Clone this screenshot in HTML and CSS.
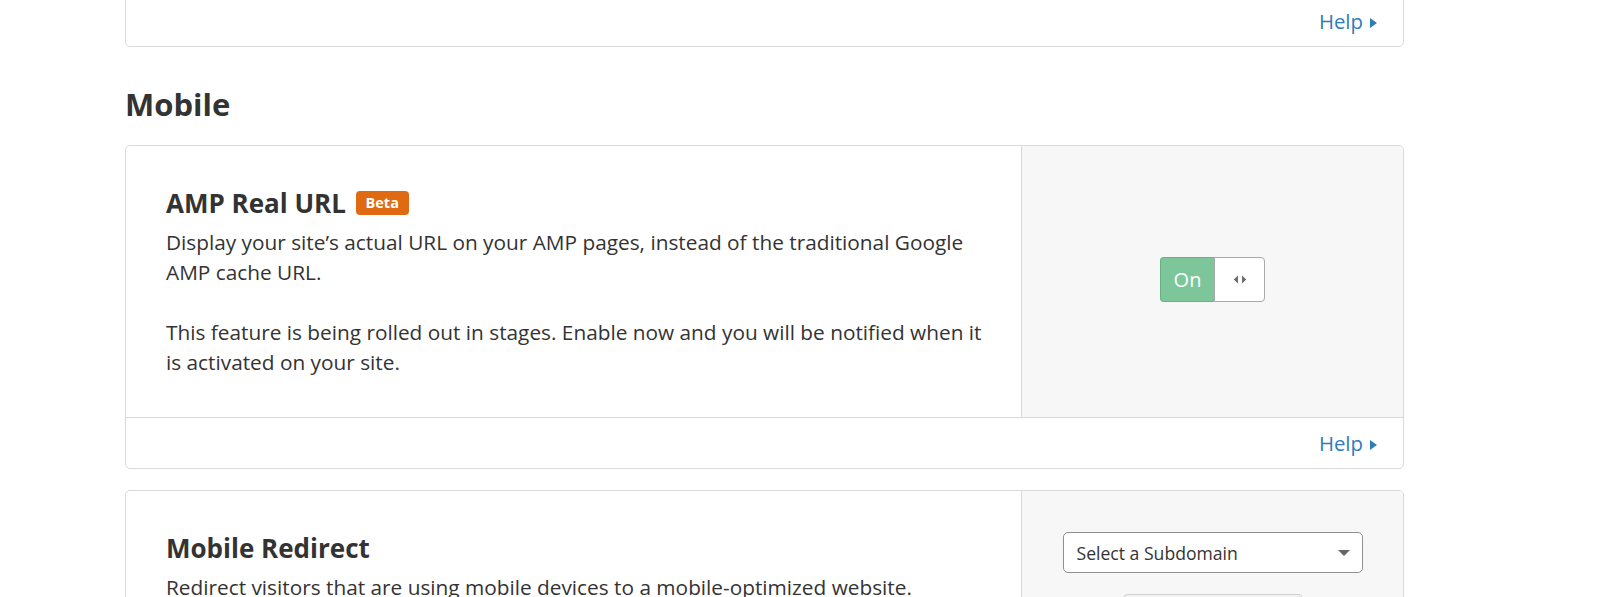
FILE: index.html
```html
<!DOCTYPE html>
<html>
<head>
<meta charset="utf-8">
<title>Mobile settings</title>
<link rel="stylesheet" href="styles.css">
</head>
<body>
<main class="page">
  <section class="card card-tail">
    <div class="card-footer">
      <a class="help" href="#">Help<span class="help-caret"></span></a>
    </div>
  </section>

  <h2 class="section-title">Mobile</h2>

  <section class="card">
    <div class="card-body">
      <div class="card-main">
        <h3 class="card-title">AMP Real URL <span class="badge">Beta</span></h3>
        <p class="card-text">Display your site’s actual URL on your AMP pages, instead of the traditional Google AMP cache URL.</p>
        <p class="card-text">This feature is being rolled out in stages. Enable now and you will be notified when it is activated on your site.</p>
      </div>
      <div class="card-side side-center">
        <div class="toggle">
          <span class="toggle-on">On</span>
          <span class="toggle-handle">
            <svg width="14" height="9" viewBox="0 0 14 9"><path d="M5 0.5 L0.8 4.5 L5 8.5 Z" fill="#6b6b6b"/><path d="M9 0.5 L13.2 4.5 L9 8.5 Z" fill="#6b6b6b"/></svg>
          </span>
        </div>
      </div>
    </div>
    <div class="card-footer">
      <a class="help" href="#">Help<span class="help-caret"></span></a>
    </div>
  </section>

  <section class="card">
    <div class="card-body">
      <div class="card-main">
        <h3 class="card-title">Mobile Redirect</h3>
        <p class="card-text">Redirect visitors that are using mobile devices to a mobile-optimized website.</p>
      </div>
      <div class="card-side side-top">
        <div class="select">
          <span class="select-label">Select a Subdomain</span>
          <span class="select-caret"></span>
        </div>
        <button class="side-button" type="button" aria-label="Save"></button>
      </div>
    </div>
  </section>
</main>
</body>
</html>
```
FILE: styles.css
```css
* { box-sizing: border-box; }
html, body { margin: 0; padding: 0; background: #fff; }
body {
  font-family: "Open Sans", "Noto Sans", sans-serif;
  color: #333;
  font-size: 20.8px;
  line-height: 30px;
}
.page {
  width: 1279px;
  margin-left: 125px;
  padding-bottom: 60px;
}
.card {
  border: 1px solid #d9d9d9;
  border-radius: 5px;
  background: #fff;
  margin-bottom: 21px;
  overflow: hidden;
}
.card-tail {
  margin-top: -5px;
  margin-bottom: 0;
}
.card-footer {
  height: 50px;
  display: flex;
  align-items: center;
  justify-content: flex-end;
  padding-right: 26px;
}
.card-body + .card-footer {
  height: 51px;
  border-top: 1px solid #d9d9d9;
}
.help {
  color: #2f7cb9;
  text-decoration: none;
  display: inline-flex;
  align-items: center;
  font-size: 20.4px;
  line-height: 30px;
}
.help-caret {
  width: 0; height: 0;
  margin-left: 7px;
  margin-top: 3px;
  border-top: 5.5px solid transparent;
  border-bottom: 5.5px solid transparent;
  border-left: 7px solid #2f7cb9;
}
.section-title {
  margin: 37px 0 21px;
  font-size: 31px;
  line-height: 40px;
  font-weight: 700;
  color: #333;
}
.card-body {
  display: flex;
}
.card-main {
  width: 895px;
  padding: 40px 30px 40px 40px;
}
.card-side {
  flex: 1;
  background: #f7f7f7;
  border-left: 1px solid #d9d9d9;
  display: flex;
  flex-direction: column;
  align-items: center;
}
.side-center { justify-content: center; padding-bottom: 4px; }
.side-top { padding-top: 41px; gap: 21px; }
.card-title {
  margin: 0 0 7px;
  font-size: 26px;
  line-height: 34px;
  font-weight: 700;
  color: #333;
}
.badge {
  display: inline-block;
  vertical-align: 5px;
  margin-left: 3px;
  width: 53px;
  height: 24px;
  border-radius: 4px;
  background: #e06a12;
  color: #fff;
  font-size: 14.5px;
  line-height: 24px;
  font-weight: 700;
  text-align: center;
}
.card-text { margin: 0 0 30px; }
.card-text:last-child { margin-bottom: 0; }
.toggle {
  display: flex;
  width: 105px;
  height: 45px;
}
.toggle-on {
  width: 54px;
  background: #7cc69a;
  border: 1px solid #65b383;
  border-right: none;
  border-radius: 4px 0 0 4px;
  color: #fff;
  font-size: 20px;
  display: flex;
  align-items: center;
  justify-content: center;
}
.toggle-handle {
  flex: 1;
  background: #fff;
  border: 1px solid #a9a9a9;
  border-radius: 0 4px 4px 0;
  display: flex;
  align-items: center;
  justify-content: center;
}
.select {
  width: 300px;
  height: 41px;
  border: 1px solid #8f8f8f;
  border-radius: 5px;
  background: #fff;
  display: flex;
  align-items: center;
  justify-content: space-between;
  padding: 0 12px 0 13px;
}
.select-label { font-size: 17.6px; color: #333; }
.select-caret {
  width: 0; height: 0;
  border-left: 6px solid transparent;
  border-right: 6px solid transparent;
  border-top: 6px solid #666;
}
.side-button {
  width: 180px;
  height: 42px;
  border: 1px solid #cfcfcf;
  border-radius: 5px;
  background: #f2f2f2;
}
```
